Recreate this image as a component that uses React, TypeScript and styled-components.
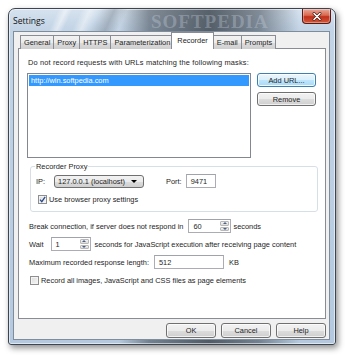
import React from "react";
import styled, { createGlobalStyle, css } from "styled-components";

const Global = createGlobalStyle`
  html, body { margin: 0; padding: 0; background: #ffffff; }
  body { padding: 8px; width: 350px; height: 362px; box-sizing: border-box; overflow: hidden; }
  * { box-sizing: border-box; }
`;

const FONT = `"Liberation Sans", Arial, sans-serif`;

const Window = styled.div`
  width: 328px;
  height: 337px;
  border: 1px solid #3d4650;
  border-radius: 7px 7px 3px 3px;
  background:
    linear-gradient(90deg, rgba(255,255,255,0) 0px, rgba(255,255,255,0) 110px, rgba(60,70,80,0.55) 140px, rgba(40,48,56,0.72) 200px, rgba(60,70,80,0.55) 250px, rgba(255,255,255,0) 290px),
    linear-gradient(180deg, #d6e2ee 0px, #c3d4e6 20px, #b4c9df 100%);
  box-shadow: 2px 3px 6px rgba(0,0,0,0.45), inset 0 0 0 1px rgba(255,255,255,0.55);
  display: flex;
  flex-direction: column;
  font-family: ${FONT};
  font-size: 7.4px;
  color: #1e1e1e;
  overflow: hidden;
  position: relative;
`;

const TitleBar = styled.div`
  height: 22px;
  display: flex;
  align-items: center;
  padding-left: 4px;
  position: relative;
  background:
    linear-gradient(115deg, rgba(255,255,255,0) 45px, rgba(255,255,255,0.5) 52px, rgba(255,255,255,0) 58px, rgba(255,255,255,0) 66px, rgba(255,255,255,0.45) 74px, rgba(255,255,255,0) 82px, rgba(90,100,110,0.35) 96px, rgba(255,255,255,0) 108px);
`;

const Title = styled.span`
  font-family: "Open Sans", "Noto Sans", sans-serif;
  font-size: 8.6px;
  color: #111;
  margin-top: 2px;
`;

const Watermark = styled.span`
  position: absolute;
  left: 142px;
  top: 2px;
  font-family: "Liberation Serif", serif;
  font-weight: bold;
  font-size: 19px;
  letter-spacing: 1px;
  color: rgba(205,216,228,0.32);
`;

const CloseButton = styled.div`
  position: absolute;
  right: 4px;
  top: 0px;
  width: 29px;
  height: 15px;
  border: 1px solid #5a1a14;
  border-top: none;
  border-radius: 0 0 4px 4px;
  background: linear-gradient(180deg, #e9a99c 0%, #d8694f 45%, #c1301a 55%, #d3573a 100%);
  box-shadow: inset 0 0 0 1px rgba(255,255,255,0.35);
  display: flex;
  align-items: center;
  justify-content: center;
`;

const Client = styled.div`
  flex: 1;
  margin: 0 5px 4px 4px;
  background: #f0f0f0;
  border: 1px solid #7e8c9c;
  display: flex;
  flex-direction: column;
  padding: 1px 3px 1px 4px;
`;

const TabStrip = styled.div`
  display: flex;
  align-items: flex-end;
  height: 16px;
  padding-left: 2px;
  position: relative;
  z-index: 1;
  margin-bottom: -1px;
`;

const Tab = styled.div<{ $active?: boolean }>`
  height: 14px;
  padding: 0 3px;
  display: flex;
  align-items: center;
  border: 1px solid #898c95;
  border-bottom: none;
  margin-right: -1px;
  background: linear-gradient(180deg, #f2f2f2 0%, #ebebeb 50%, #dddddd 51%, #cfcfcf 100%);
  white-space: nowrap;
  ${(p) =>
    p.$active &&
    css`
      height: 17px;
      padding: 0 5px 1px;
      margin: 0 -1px 0 -2px;
      background: #ffffff;
      position: relative;
      z-index: 2;
    `}
`;

const Panel = styled.div`
  height: 271px;
  border: 1px solid #898c95;
  background: #ffffff;
  padding: 9px 8px 0 8px;
  display: flex;
  flex-direction: column;
`;

const Label = styled.span`
  line-height: 9px;
  white-space: nowrap;
`;

const TopLabel = styled(Label)`
  margin-left: 1px;
  letter-spacing: 0.15px;
`;

const ListRow = styled.div`
  display: flex;
  margin-top: 6px;
  gap: 6px;
`;

const ListBox = styled.div`
  width: 224px;
  height: 85px;
  border: 1px solid #828790;
  padding: 1px;
`;

const ListItem = styled.div<{ $selected?: boolean }>`
  height: 11px;
  line-height: 11px;
  padding-left: 2px;
  ${(p) =>
    p.$selected &&
    css`
      background: #3399ff;
      color: #fff;
    `}
`;

const SideButtons = styled.div`
  display: flex;
  flex-direction: column;
  gap: 5px;
`;

const Button = styled.button<{ $default?: boolean; $w?: number; $h?: number }>`
  width: ${(p) => p.$w ?? 59}px;
  height: ${(p) => p.$h ?? 14}px;
  padding: 0;
  font-family: ${FONT};
  font-size: 7.4px;
  color: #1e1e1e;
  border: 1px solid #707070;
  border-radius: 3px;
  background: linear-gradient(180deg, #f2f2f2 0%, #ebebeb 50%, #dddddd 51%, #cfcfcf 100%);
  box-shadow: inset 0 0 0 1px rgba(255,255,255,0.7);
  ${(p) =>
    p.$default &&
    css`
      border-color: #3c7fb1;
      background: linear-gradient(180deg, #eaf6fd 0%, #d9f0fc 50%, #bee6fd 51%, #a7d9f5 100%);
      box-shadow: inset 0 0 0 1px rgba(255,255,255,0.8);
    `}
`;

const Group = styled.fieldset`
  margin: 4px 0 0 3px;
  width: 288px;
  height: 50px;
  border: 1px solid #d5dfe5;
  border-radius: 3px;
  padding: 0 0 0 5px;
  display: flex;
  flex-direction: column;
`;

const Legend = styled.legend`
  padding: 0 1px;
  margin-left: -1px;
  line-height: 9px;
  font-size: 7.4px;
`;

const GroupRow = styled.div`
  display: flex;
  align-items: center;
  margin-top: 3px;
`;

const Select = styled.div`
  width: 90px;
  height: 13px;
  margin-left: 9px;
  border: 1px solid #707070;
  border-radius: 3px;
  background: linear-gradient(180deg, #f2f2f2 0%, #ebebeb 50%, #dddddd 51%, #cfcfcf 100%);
  display: flex;
  align-items: center;
  padding: 0 6px 0 3px;
  justify-content: space-between;
`;

const Arrow = styled.span`
  width: 0;
  height: 0;
  border-left: 3px solid transparent;
  border-right: 3px solid transparent;
  border-top: 3px solid #000;
`;

const TextBox = styled.div<{ $w: number }>`
  width: ${(p) => p.$w}px;
  height: 14px;
  border: 1px solid #abadb3;
  border-top-color: #a0a3a9;
  background: #fff;
  display: flex;
  align-items: center;
  padding-left: 4px;
  position: relative;
`;

const SpinButtons = styled.div`
  position: absolute;
  right: 1px;
  top: 1px;
  bottom: 1px;
  width: 9px;
  display: flex;
  flex-direction: column;
  gap: 1px;
`;

const SpinHalf = styled.div<{ $up?: boolean }>`
  flex: 1;
  background: linear-gradient(180deg, #f4f4f4, #dcdcdc);
  border: 1px solid #b8b8b8;
  border-radius: 1px;
  display: flex;
  align-items: center;
  justify-content: center;
  &::after {
    content: "";
    width: 0;
    height: 0;
    border-left: 2px solid transparent;
    border-right: 2px solid transparent;
    ${(p) => (p.$up ? "border-bottom: 2px solid #4d6185;" : "border-top: 2px solid #4d6185;")}
  }
`;

const CheckRow = styled.div<{ $mt: number; $ml: number }>`
  display: flex;
  align-items: center;
  margin-top: ${(p) => p.$mt}px;
  margin-left: ${(p) => p.$ml}px;
  gap: 2px;
`;

const CheckBox = styled.div`
  width: 9px;
  height: 9px;
  border: 1px solid #8f8f8f;
  background: linear-gradient(135deg, #dcdcdc, #f6f6f6);
  box-shadow: inset 0 0 0 1px #f4f4f4;
  display: flex;
  align-items: center;
  justify-content: center;
`;

const FormRow = styled.div<{ $mt: number }>`
  display: flex;
  align-items: center;
  margin-top: ${(p) => p.$mt}px;
  margin-left: 2px;
`;

const Gap = styled.span<{ $w: number }>`
  display: inline-block;
  width: ${(p) => p.$w}px;
  flex: none;
`;

const Footer = styled.div`
  display: flex;
  justify-content: flex-end;
  gap: 5px;
  margin-top: 4px;
`;

const Spin = ({ w, value }: { w: number; value: string }) => (
  <TextBox $w={w}>
    {value}
    <SpinButtons>
      <SpinHalf $up />
      <SpinHalf />
    </SpinButtons>
  </TextBox>
);

const Check = () => (
  <svg width="7" height="7" viewBox="0 0 7 7">
    <path d="M1 3.6 L2.8 5.6 L6.2 0.8" fill="none" stroke="#2a4a8c" strokeWidth="1.3" />
  </svg>
);

const tabs = ["General", "Proxy", "HTTPS", "Parameterization", "Recorder", "E-mail", "Prompts"];

export default function App() {
  return (
    <>
      <Global />
      <Window>
        <TitleBar>
          <Title>Settings</Title>
          <Watermark>SOFTPEDIA</Watermark>
          <CloseButton>
            <svg width="10" height="9" viewBox="0 0 10 9">
              <path d="M2 1.5 L8 7.5 M8 1.5 L2 7.5" stroke="#3a1a14" strokeWidth="2.8" strokeLinecap="round" />
              <path d="M2 1.5 L8 7.5 M8 1.5 L2 7.5" stroke="#ffffff" strokeWidth="1.6" strokeLinecap="round" />
            </svg>
          </CloseButton>
        </TitleBar>
        <Client>
          <TabStrip>
            {tabs.map((t) => (
              <Tab key={t} $active={t === "Recorder"}>
                {t}
              </Tab>
            ))}
          </TabStrip>
          <Panel>
            <TopLabel>Do not record requests with URLs matching the following masks:</TopLabel>
            <ListRow>
              <ListBox>
                <ListItem $selected>http://win.softpedia.com</ListItem>
              </ListBox>
              <SideButtons>
                <Button $default>Add URL...</Button>
                <Button>Remove</Button>
              </SideButtons>
            </ListRow>
            <Group>
              <Legend>Recorder Proxy</Legend>
              <GroupRow>
                <Label>IP:</Label>
                <Select>
                  <span>127.0.0.1 (localhost)</span>
                  <Arrow />
                </Select>
                <Gap $w={22} />
                <Label>Port:</Label>
                <Gap $w={4} />
                <TextBox $w={30}>9471</TextBox>
              </GroupRow>
              <CheckRow $mt={7} $ml={2}>
                <CheckBox>
                  <Check />
                </CheckBox>
                <Label>Use browser proxy settings</Label>
              </CheckRow>
            </Group>
            <FormRow $mt={7}>
              <Label>Break connection, if server does not respond in</Label>
              <Gap $w={5} />
              <Spin w={43} value="60" />
              <Gap $w={2} />
              <Label>seconds</Label>
            </FormRow>
            <FormRow $mt={4}>
              <Label>Wait</Label>
              <Gap $w={7} />
              <Spin w={40} value="1" />
              <Gap $w={4} />
              <Label>seconds for JavaScript execution after receiving page content</Label>
            </FormRow>
            <FormRow $mt={4}>
              <Label>Maximum recorded response length:</Label>
              <Gap $w={5} />
              <TextBox $w={70}>512</TextBox>
              <Gap $w={5} />
              <Label>KB</Label>
            </FormRow>
            <CheckRow $mt={7} $ml={3}>
              <CheckBox />
              <Label>Record all images, JavaScript and CSS files as page elements</Label>
            </CheckRow>
          </Panel>
          <Footer>
            <Button $w={50} $h={15}>OK</Button>
            <Button $w={50} $h={15}>Cancel</Button>
            <Button $w={50} $h={15}>Help</Button>
          </Footer>
        </Client>
      </Window>
    </>
  );
}
